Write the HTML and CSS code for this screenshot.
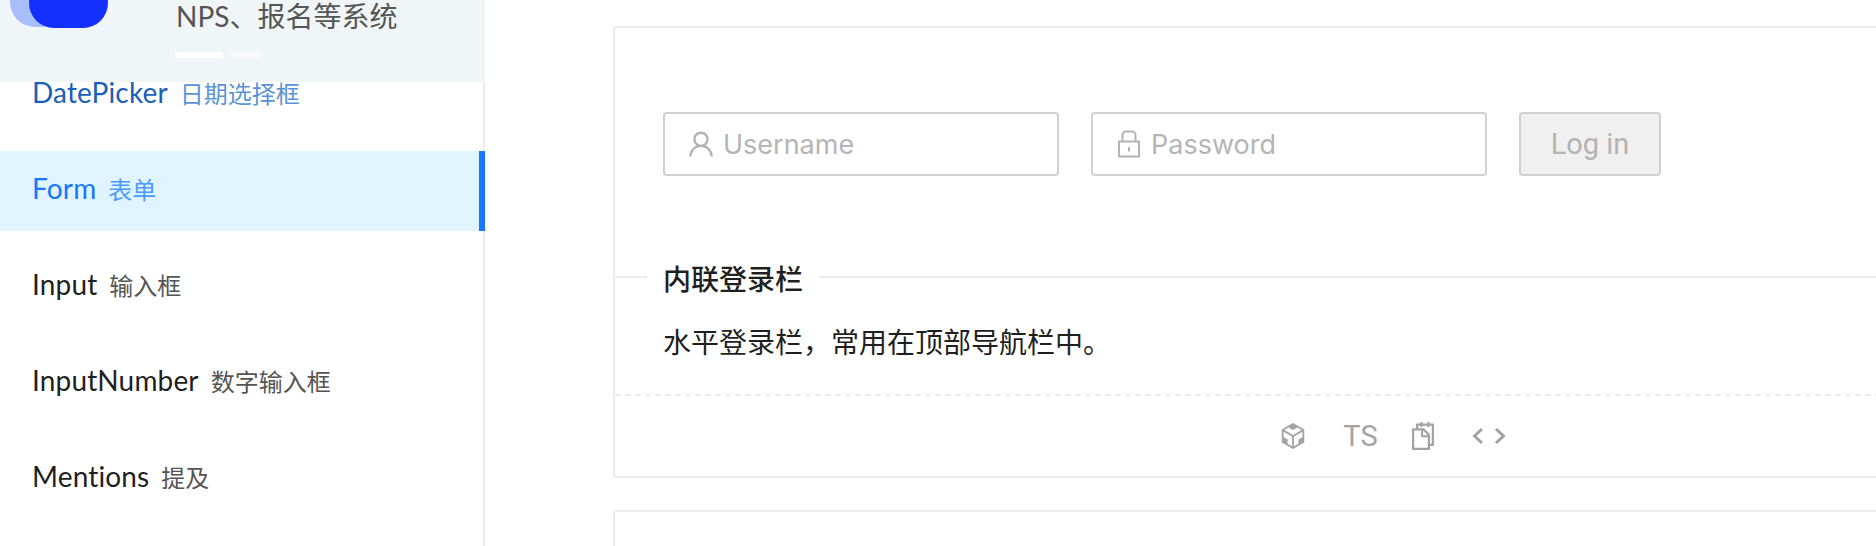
FILE: index.html
```html
<!DOCTYPE html>
<html lang="zh-CN">
<head>
<meta charset="utf-8">
<title>Form 表单</title>
<link rel="stylesheet" href="styles.css">
</head>
<body>
<div class="layout">
  <aside class="sider">
    <div class="promo">
      <div class="promo-logo"><span class="pill-back"></span><span class="pill-front"></span></div>
      <div class="promo-body">
        <div class="promo-text">NPS、报名等系统</div>
        <div class="promo-dots"><span class="dot-on"></span><span class="dot-off"></span></div>
      </div>
    </div>
    <ul class="menu">
      <li class="menu-item is-hover"><span class="en">DatePicker</span><span class="cn">日期选择框</span></li>
      <li class="menu-item is-active"><span class="en">Form</span><span class="cn">表单</span></li>
      <li class="menu-item"><span class="en">Input</span><span class="cn">输入框</span></li>
      <li class="menu-item"><span class="en">InputNumber</span><span class="cn">数字输入框</span></li>
      <li class="menu-item"><span class="en">Mentions</span><span class="cn">提及</span></li>
    </ul>
  </aside>
  <main class="main">
    <section class="card">
      <div class="demo">
        <form class="login">
          <label class="field">
            <svg class="field-icon" viewBox="64 64 896 896"><path d="M858.5 763.6a374 374 0 0 0-80.6-119.5 375.63 375.63 0 0 0-119.5-80.6c-.4-.2-.8-.3-1.2-.5C719.5 518 760 444.7 760 362c0-137-111-248-248-248S264 225 264 362c0 82.7 40.5 156 102.8 201.1-.4.2-.8.3-1.2.5-44.8 18.9-85 46-119.5 80.6a375.63 375.63 0 0 0-80.6 119.5A371.7 371.7 0 0 0 136 901.8a8 8 0 0 0 8 8.2h60c4.4 0 7.9-3.5 8-7.8 2-77.2 33-149.5 87.8-204.3 56.7-56.7 132-87.9 212.2-87.9s155.5 31.2 212.2 87.9C779 752.7 810 825 812 902.2c.1 4.4 3.6 7.8 8 7.8h60a8 8 0 0 0 8-8.2c-1-47.8-10.9-94.3-29.5-138.2zM512 534c-45.9 0-89.1-17.9-121.6-50.4S340 407.9 340 362c0-45.9 17.9-89.1 50.4-121.6S466.1 190 512 190s89.1 17.9 121.6 50.4S684 316.1 684 362c0 45.9-17.9 89.1-50.4 121.6S557.9 534 512 534z"/></svg>
            <input class="field-input" placeholder="Username">
          </label>
          <label class="field">
            <svg class="field-lock" viewBox="0 0 22 28"><path class="lock-line" d="M1 11.5h20v15H1zM4.5 11.5V5a3.5 3.5 0 0 1 3.5-3.5h6A3.5 3.5 0 0 1 17.5 5v6.5M11 17v4.5"/></svg>
            <input class="field-input" placeholder="Password">
          </label>
          <button class="submit" type="button" disabled>Log in</button>
        </form>
      </div>
      <div class="meta">
        <div class="meta-title">内联登录栏</div>
        <p class="meta-desc">水平登录栏，常用在顶部导航栏中。</p>
      </div>
      <div class="actions">
        <svg class="action-icon" viewBox="64 64 896 896"><path d="M709.6 210l.4-.2h.2L512 96 313.9 209.8h-.2l.7.3L151.5 304v416L512 928l360.5-208V304l-162.9-94zM482.7 843.6L339.6 761V621.4L210 547.8V372.9l272.7 157.3v313.4zM238.2 321.5l134.7-77.8 138.9 79.7 139.1-79.9 135.2 78-273.9 158-274-158zM814.5 548l-128.8 73.1v139.1l-143.9 83V530.4l272.7-157.3v174.9z"/></svg>
        <span class="action-ts">TS</span>
        <svg class="action-icon" viewBox="64 64 896 896"><path d="M832 112H724V72c0-4.4-3.6-8-8-8h-56c-4.4 0-8 3.6-8 8v40H500V72c0-4.4-3.6-8-8-8h-56c-4.4 0-8 3.6-8 8v40H320c-17.7 0-32 14.3-32 32v120h-96c-17.7 0-32 14.3-32 32v632c0 17.7 14.3 32 32 32h512c17.7 0 32-14.3 32-32v-96h96c17.7 0 32-14.3 32-32V144c0-17.7-14.3-32-32-32zM664 888H232V336h218v174c0 22.1 17.9 40 40 40h174v338zm0-402H514V336h.2L664 485.8v.2zm128 274h-56V456L544 264H360v-80h68v32c0 4.4 3.6 8 8 8h56c4.4 0 8-3.6 8-8v-32h152v32c0 4.4 3.6 8 8 8h56c4.4 0 8-3.6 8-8v-32h68v576z"/></svg>
        <svg class="action-code" viewBox="0 0 36 18"><path d="M11 2 3.5 9 11 16M25 2 32.5 9 25 16"/></svg>
      </div>
    </section>
    <section class="card card-next"></section>
  </main>
</div>
</body>
</html>
```

FILE: styles.css
```css
* { box-sizing: border-box; }
html, body { margin: 0; padding: 0; height: 546px; overflow: hidden; background: #fff; }
body { font-family: Lato, "Noto Sans CJK SC", sans-serif; }

.layout { display: flex; height: 546px; overflow: hidden; }

.sider {
  position: relative;
  flex: 0 0 485px;
  height: 100%;
  overflow: hidden;
}

.promo {
  position: absolute;
  top: 0;
  left: 0;
  right: 0;
  height: 82px;
  background: #f0f5f8;
  display: flex;
  z-index: 2;
}
.promo-logo { position: relative; width: 175px; flex: none; }
.pill-back, .pill-front { position: absolute; display: block; border-radius: 25px; }
.pill-back { left: 10px; top: -23px; width: 60px; height: 50px; background: #a9bffb; }
.pill-front { left: 29px; top: -22px; width: 79px; height: 50px; background: #1330fd; }
.promo-text {
  margin-left: 1px;
  height: 36px;
  font-size: 28px;
  line-height: 32px;
  color: #555;
  white-space: nowrap;
}
.promo-dots { display: flex; gap: 8px; margin-top: 16px; }
.dot-on { width: 48px; height: 6px; border-radius: 2px; background: #fff; }
.dot-off { width: 32px; height: 6px; border-radius: 2px; background: #f7f9fb; }

.menu {
  list-style: none;
  height: 100%;
  margin: 0;
  padding: 55px 0 0;
  border-right: 2px solid #ececec;
}
.menu-item {
  display: flex;
  align-items: center;
  gap: 12px;
  height: 80px;
  margin: 0 -2px 16px 0;
  padding: 0 0 6px 32px;
  color: #1f1f1f;
}
.en { font-size: 28px; letter-spacing: 0.15px; }
.cn { font-size: 24px; color: #555; }
.menu-item.is-hover .en { color: #1a5fb8; }
.menu-item.is-hover .cn { color: #5b93d6; }
.menu-item.is-active { background: #e0f4ff; border-right: 6px solid #1677ff; }
.menu-item.is-active .en { color: #1677ff; }
.menu-item.is-active .cn { color: #4c9bff; }

.main { flex: 1; min-width: 0; padding: 26px 0 0 128px; overflow: hidden; }

.card {
  width: 1560px;
  border: 2px solid #ececec;
  border-radius: 4px;
  background: #fff;
}
.card-next { height: 80px; margin-top: 32px; }

.demo { height: 248px; padding: 84px 48px 0; }
.login { display: flex; gap: 32px; }
.field {
  display: flex;
  align-items: center;
  gap: 8px;
  width: 396px;
  height: 64px;
  padding: 0 22px;
  border: 2px solid #d0d0d0;
  border-radius: 4px;
}
.field-icon { width: 28px; height: 28px; flex: none; fill: #b3b3b3; }
.field-lock { width: 22px; height: 28px; margin: 0 3px; flex: none; }
.lock-line { fill: none; stroke: #b3b3b3; stroke-width: 2; }
.field-input {
  flex: 1;
  min-width: 0;
  border: 0;
  padding: 0;
  outline: 0;
  background: transparent;
  font: 27px Inter, sans-serif;
}
.field-input::placeholder { color: #b5b5b5; opacity: 1; }
.submit {
  width: 142px;
  height: 64px;
  border: 2px solid #d0d0d0;
  border-radius: 4px;
  background: #f0f0f0;
  color: #b3b3b3;
  font: 29px Roboto, sans-serif;
  padding: 0;
}

.meta {
  position: relative;
  height: 120px;
  padding: 44px 48px 0;
  border-top: 2px solid #ececec;
  border-bottom: 2px dashed #ececec;
}
.meta-title {
  position: absolute;
  left: 32px;
  top: -19px;
  padding: 0 16px;
  background: #fff;
  font-size: 28px;
  font-weight: 500;
  line-height: 40px;
  color: #1f1f1f;
}
.meta-desc { margin: 0; font-size: 28px; line-height: 40px; color: #1f1f1f; }

.actions {
  display: flex;
  align-items: center;
  justify-content: center;
  gap: 35px;
  height: 80px;
}
.action-icon { width: 28px; height: 28px; fill: #a3a3a3; }
.action-ts { margin: 0 -4px 0 1px; font: 29px Roboto, sans-serif; color: #a3a3a3; }
.action-code { width: 36px; height: 18px; margin-left: -1px; fill: none; stroke: #a3a3a3; stroke-width: 3; }
```
